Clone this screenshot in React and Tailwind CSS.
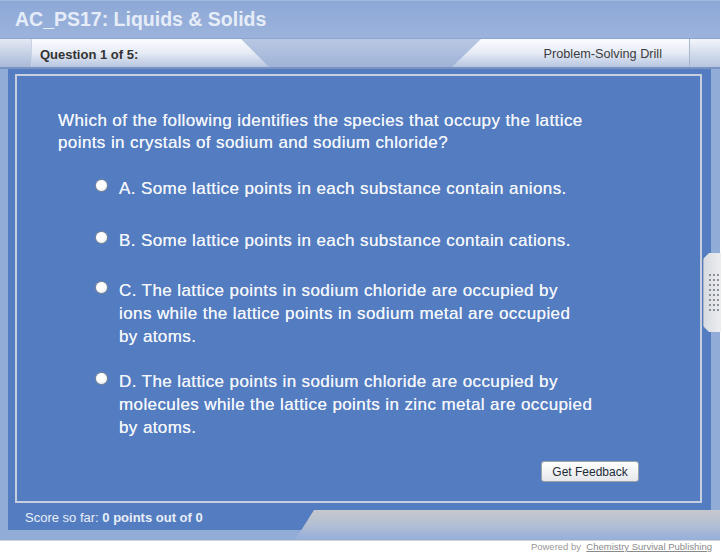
import React from "react";

function Radio() {
  return (
    <div className="mt-[2px] h-[13px] w-[13px] shrink-0 rounded-full border border-[#7d8796] bg-[radial-gradient(circle_at_40%_35%,#ffffff_0%,#ffffff_45%,#d9dde4_100%)]" />
  );
}

function Option({ lines, className }) {
  return (
    <div className={"flex items-start pl-[37px] " + className}>
      <Radio />
      <div className="ml-[11px] text-[17px] leading-[23px] tracking-[0.4px] text-[#f2f5fb] [text-shadow:0_0_0.5px_#f2f5fb]">
        {lines.map((l, i) => (
          <div key={i}>{l}</div>
        ))}
      </div>
    </div>
  );
}

export default function App() {
  return (
    <div className="relative h-[556px] w-[722px] bg-white font-['Liberation_Sans',Arial,sans-serif]">
      <div className="flex h-[541px] w-[720px] flex-col border-b border-[#d4d4d4] bg-[#92acd8]">
        {/* title */}
        <div className="flex h-[38px] items-center border-t border-[#a3b9df] bg-gradient-to-b from-[#8ea8d6] to-[#9bb3dc] pl-[15px]">
          <span className="text-[19.5px] font-bold leading-none text-[#e6edf8]">
            AC_PS17: Liquids &amp; Solids
          </span>
        </div>
        {/* header */}
        <div className="flex h-[31px] border-t border-[#8ba4d0] border-b-2 border-b-[#7a92c2] bg-gradient-to-b from-[#b9c8e3] to-[#9fb3d8]">
          <div className="w-[32px] border-r border-[#c9d3e6] bg-gradient-to-b from-[#e4e9f3] to-[#a9b9d8]" />
          <div className="flex w-[237px] items-center bg-gradient-to-b from-[#fbfcfe] via-[#e6ebf5] to-[#b6c5df] pl-[8px] pt-[3px] [clip-path:polygon(0_0,209px_0,100%_100%,0_100%)]">
            <span className="text-[13px] font-bold text-[#333]">Question 1 of 5:</span>
          </div>
          <div className="flex-1" />
          <div className="flex w-[237px] items-center justify-end bg-gradient-to-b from-[#fbfcfe] via-[#e6ebf5] to-[#b6c5df] pr-[27px] pt-[3px] [clip-path:polygon(29px_0,100%_0,100%_100%,0_100%)]">
            <span className="text-[12.7px] text-[#3c3c3c]">Problem-Solving Drill</span>
          </div>
          <div className="w-[1px] bg-[#a8b6d0]" />
          <div className="w-[30px] bg-gradient-to-b from-[#f3f5fa] to-[#b6c5df]" />
        </div>
        {/* main */}
        <div className="flex flex-1">
          <div className="ml-[8px] w-[703px] bg-[#547dc1] pb-[7px] pl-[7px] pr-[9px] pt-[5px]">
            <div className="flex h-full flex-col border-2 border-[#c6cedf] pl-[41px] pt-[34px]">
              <div className="text-[17px] leading-[22px] tracking-[0.4px] text-[#f2f5fb] [text-shadow:0_0_0.5px_#f2f5fb]">
                <div>Which of the following identifies the species that occupy the lattice</div>
                <div>points in crystals of sodium and sodium chloride?</div>
              </div>
              <Option className="mt-[23px]" lines={["A. Some lattice points in each substance contain anions."]} />
              <Option className="mt-[29px]" lines={["B. Some lattice points in each substance contain cations."]} />
              <Option
                className="mt-[27px]"
                lines={[
                  "C. The lattice points in sodium chloride are occupied by",
                  "ions while the lattice points in sodium metal are occupied",
                  "by atoms.",
                ]}
              />
              <Option
                className="mt-[22px]"
                lines={[
                  "D. The lattice points in sodium chloride are occupied by",
                  "molecules while the lattice points in zinc metal are occupied",
                  "by atoms.",
                ]}
              />
              <div className="mt-[22px] flex justify-end pr-[61px]">
                <div className="flex h-[21px] w-[98px] items-center justify-center rounded-[3px] border border-[#9ea3aa] bg-gradient-to-b from-[#ffffff] to-[#e6e8eb] text-[12px] text-[#1d2b38]">
                  Get Feedback
                </div>
              </div>
            </div>
          </div>
        </div>
        {/* bottom row */}
        <div className="flex h-[30px]">
          <div className="ml-[8px] flex h-[20px] w-[306px] items-start bg-[#547dc1] pl-[17px] pt-[1px]">
            <span className="text-[13px] leading-[14px] text-[#e8eef8]">
              Score so far: <b>0 points out of 0</b>
            </span>
          </div>
          <div className="ml-[-19px] flex-1 bg-gradient-to-b from-[#c6c8cc] via-[#b3bfd4] to-[#95aedb] [clip-path:polygon(19px_0,100%_0,100%_100%,0_100%)]" />
        </div>
      </div>
      {/* footer */}
      <div className="flex justify-end pr-[10px] text-[9.5px] leading-[12px] text-[#999]">
        <span>Powered by&nbsp;&nbsp;</span>
        <span className="text-[#8a8a8a] underline">Chemistry Survival Publishing</span>
      </div>
      {/* side handle */}
      <div className="absolute left-[703px] top-[253px] flex h-[79px] w-[18px] items-center justify-center border-l border-[#aab3c4] bg-gradient-to-r from-[#d8dbe1] to-[#eceef1] [clip-path:polygon(6px_0,100%_0,100%_100%,6px_100%,0_calc(100%-6px),0_6px)]">
        <div className="ml-[3px] grid grid-cols-3 gap-x-[2px] gap-y-[3px]">
          {Array.from({ length: 24 }).map((_, i) => (
            <div key={i} className="h-[2px] w-[2px] bg-[#8c9098]" />
          ))}
        </div>
      </div>
    </div>
  );
}
